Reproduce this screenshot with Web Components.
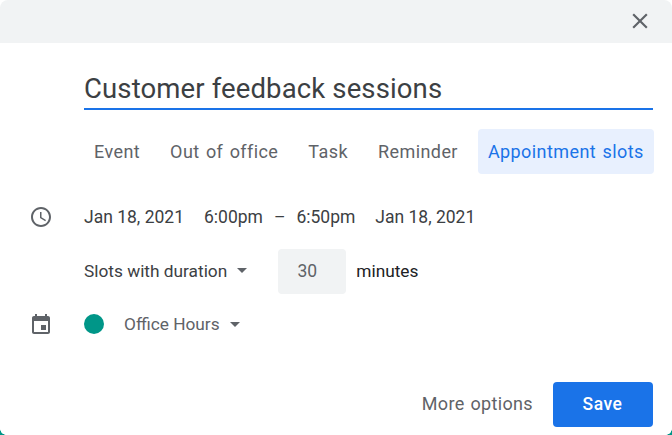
<!DOCTYPE html>
<html><head><meta charset="utf-8"><title>Event dialog</title>
<style>
html,body{margin:0;padding:0;background:#fff}
body{width:672px;height:435px;overflow:hidden;font-family:Roboto,"Liberation Sans",sans-serif}
</style></head>
<body>
<template id="t-dialog"><style>
:host{display:flex;flex-direction:column;width:672px;height:435px;background:#fff;position:relative;overflow:hidden}
.corner{position:absolute;width:6px;height:6px;bottom:0}
.l{left:0;background:radial-gradient(circle at 100% 0,transparent 5.5px,#009688 6px)}
.r{right:0;background:radial-gradient(circle at 0 0,transparent 5.5px,#009688 6px)}
.main{flex:1;display:flex;flex-direction:column;padding:0 19px 0 0}
</style><slot name="head"></slot><div class="main"><slot></slot></div><slot name="foot"></slot><i class="corner l"></i><i class="corner r"></i></template>

<template id="t-head"><style>
:host{display:flex;height:43px;background:#f1f3f4;justify-content:flex-end;align-items:center;padding-right:19px;border-radius:8px 8px 0 0}
svg{display:block;width:26px;height:26px;margin-top:-1px}
</style><svg viewBox="0 0 24 24"><path fill="#5f6368" d="M19 6.41 17.59 5 12 10.59 6.41 5 5 6.41 10.59 12 5 17.59 6.41 19 12 13.41 17.59 19 19 17.59 13.41 12z"/></svg></template>

<template id="t-title"><style>
:host{display:block;margin:24px 0 0 84px;height:41px;border-bottom:2px solid #1a73e8;box-sizing:content-box;font:400 27.5px/44px Roboto,sans-serif;color:#3c4043;white-space:nowrap;letter-spacing:.13px}
</style><slot></slot></template>

<template id="t-tabs"><style>
:host{display:flex;margin:19px 0 0 84px;gap:10px}
</style><slot></slot></template>

<template id="t-tab"><style>
:host{display:block;height:45px;padding:0 10px;border-radius:4px;font:400 18px/45px Roboto,sans-serif;letter-spacing:.42px;word-spacing:1.5px;color:#5f6368;white-space:nowrap}
:host([active]){background:#e8f0fe;color:#1a73e8}
</style><slot></slot></template>

<template id="t-row"><style>
:host{display:flex;align-items:center;height:var(--h,36px);margin-top:var(--mt,0);font:400 17.3px/24px Roboto,sans-serif;color:#3c4043;white-space:nowrap}
.i{width:84px;flex:none;display:flex;justify-content:flex-start;padding-left:29px;box-sizing:border-box}
.i ::slotted(svg){display:block;width:24px;height:24px}
</style><div class="i"><slot name="icon"></slot></div><slot></slot></template>

<template id="t-drop"><style>
:host{display:inline-flex;align-items:center;color:inherit;padding-bottom:2px}
i{display:block;width:0;height:0;border:5px solid transparent;border-top-color:#5f6368;border-bottom:0;margin-left:var(--ml,10px)}
</style><slot></slot><i></i></template>

<template id="t-num"><style>
:host{display:block;width:68px;height:45px;background:#f1f3f4;border-radius:4px;box-sizing:border-box;padding-right:10px;text-align:center;font:400 17.5px/45px Roboto,sans-serif;color:#5f6368}
</style><slot></slot></template>

<template id="t-foot"><style>
:host{display:flex;justify-content:flex-end;align-items:center;gap:20px;padding:0 19px 8px 0}
.m{font:400 18px/43px Roboto,sans-serif;letter-spacing:.35px;word-spacing:1px;color:#5f6368;padding-bottom:2px}
.s{width:100px;height:45px;box-sizing:border-box;padding-right:1px;background:#1a73e8;border-radius:4px;color:#fff;text-align:center;font:500 17.5px/45px Roboto,sans-serif;letter-spacing:.5px}
</style><span class="m">More options</span><span class="s">Save</span></template>

<cal-dialog>
<cal-head slot="head"></cal-head>
<cal-title>Customer feedback sessions</cal-title>
<cal-tabs><cal-tab>Event</cal-tab><cal-tab>Out of office</cal-tab><cal-tab>Task</cal-tab><cal-tab>Reminder</cal-tab><cal-tab active>Appointment slots</cal-tab></cal-tabs>
<cal-row style="--mt:25px;--h:36px;font-size:17.5px">
<svg slot="icon" viewBox="0 0 24 24"><path fill="#5f6368" d="M11.99 2C6.47 2 2 6.48 2 12s4.47 10 9.99 10C17.52 22 22 17.52 22 12S17.52 2 11.99 2zM12 20c-4.42 0-8-3.58-8-8s3.58-8 8-8 8 3.58 8 8-3.58 8-8 8zm.5-13H11v6l5.25 3.15.75-1.23-4.5-2.67z"/></svg>
<span>Jan 18, 2021</span><span style="margin-left:20px">6:00pm</span><span style="margin:0 11px">–</span><span>6:50pm</span><span style="margin-left:20px">Jan 18, 2021</span>
</cal-row>
<cal-row style="--mt:14px;--h:45px">
<cal-drop>Slots with duration</cal-drop><cal-num style="margin-left:31px">30</cal-num><span style="margin-left:10px;padding-bottom:2px;color:#202124">minutes</span>
</cal-row>
<cal-row style="--mt:12px;--h:36px">
<svg slot="icon" viewBox="0 0 24 24"><path fill="#5f6368" d="M19 4h-1V2h-2v2H8V2H6v2H5c-1.11 0-2 .9-2 2v14c0 1.1.89 2 2 2h14c1.1 0 2-.9 2-2V6c0-1.1-.9-2-2-2zm0 16H5V9h14v11zm-7-7h5v5h-5z"/></svg>
<svg width="20" height="20" viewBox="0 0 20 20" style="flex:none"><circle cx="10" cy="10" r="10" fill="#009688"/></svg>
<cal-drop style="margin-left:20px;color:#5f6368;padding:0">Office Hours</cal-drop>
</cal-row>
<cal-foot slot="foot"></cal-foot>
</cal-dialog>
<script>
for(const [tag,id] of [['cal-dialog','t-dialog'],['cal-head','t-head'],['cal-title','t-title'],['cal-tabs','t-tabs'],['cal-tab','t-tab'],['cal-row','t-row'],['cal-drop','t-drop'],['cal-num','t-num'],['cal-foot','t-foot']]){
customElements.define(tag,class extends HTMLElement{constructor(){super();this.attachShadow({mode:'open'}).appendChild(document.getElementById(id).content.cloneNode(true))}});
}
</script>
</body></html>
